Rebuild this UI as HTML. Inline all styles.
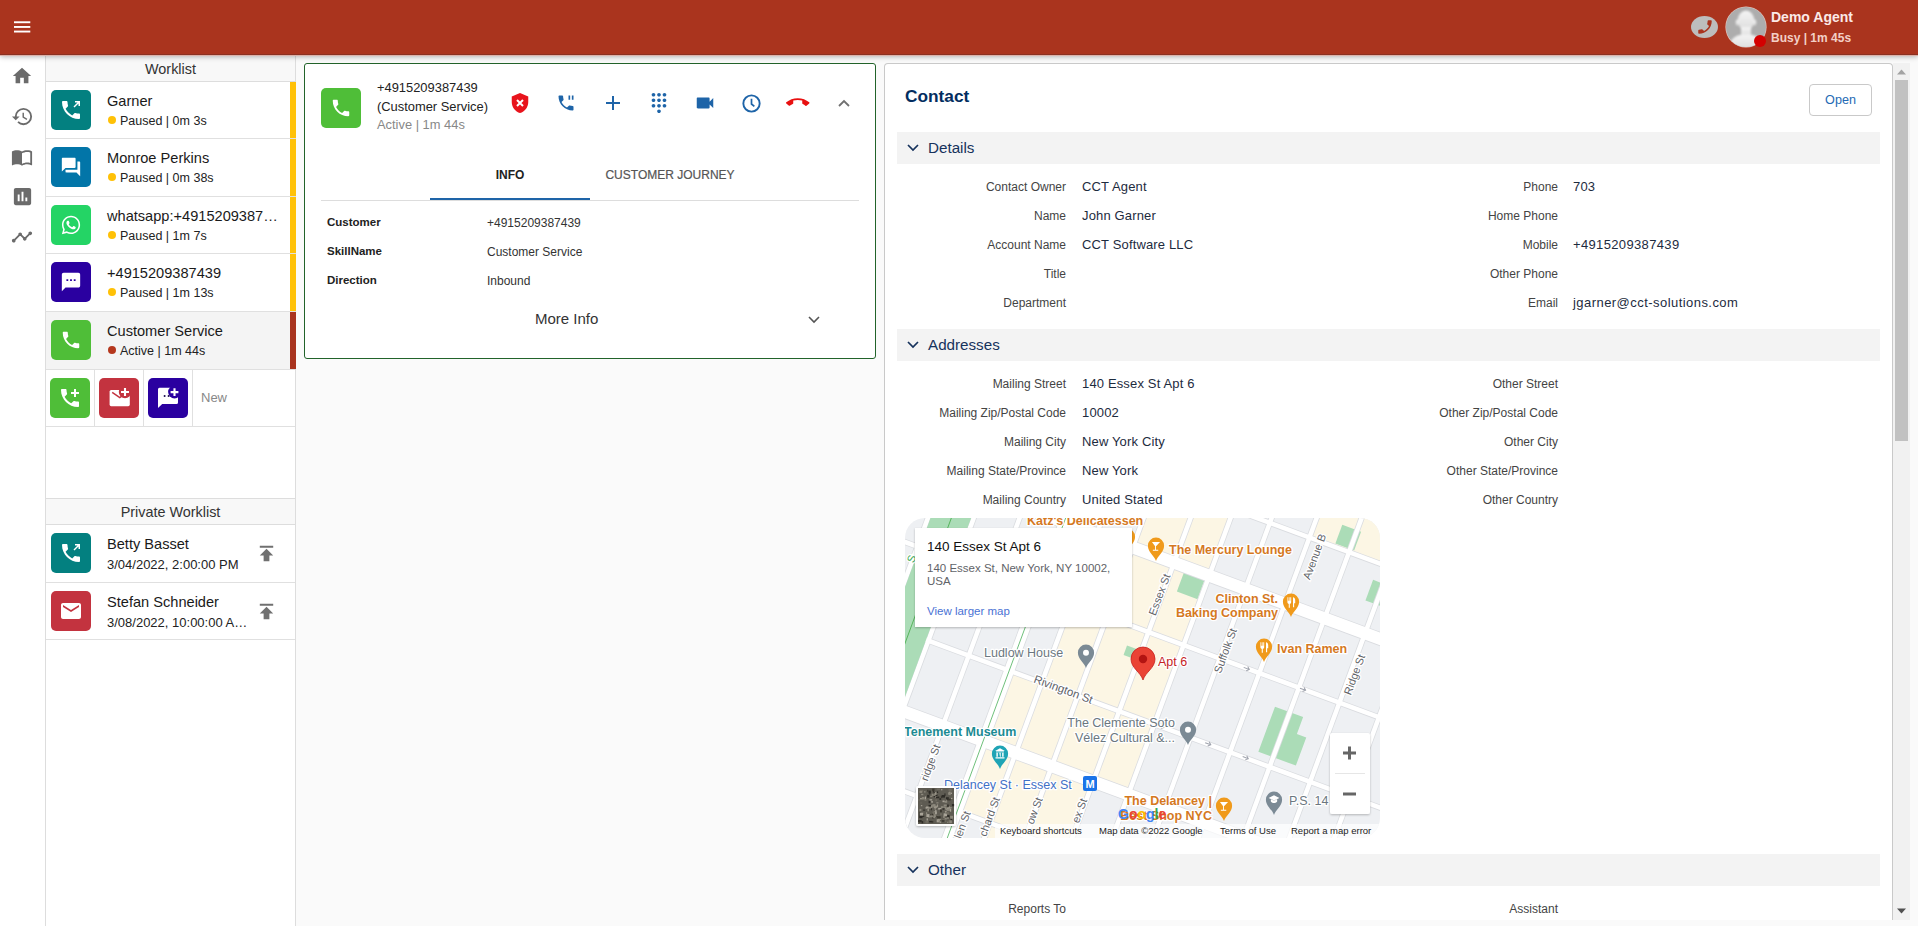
<!DOCTYPE html>
<html><head><meta charset="utf-8">
<style>
*{box-sizing:border-box}
html,body{margin:0;padding:0}
body{width:1918px;height:926px;overflow:hidden;position:relative;background:#FAFAFA;font-family:"Liberation Sans",sans-serif;color:#222}
.a{position:absolute}
#hdr{left:0;top:0;width:1918px;height:55px;background:#AA341E;border-bottom:1px solid #8A3122;box-shadow:0 2px 5px rgba(0,0,0,.28);z-index:5}
#hsh{left:0;top:55px;width:1918px;height:1px;background:#DDB2AA;z-index:6}
#nav{left:0;top:55px;width:46px;height:871px;background:#fff;border-right:1px solid #ddd}
#wl{left:46px;top:55px;width:250px;height:871px;background:#fff;border-right:1px solid #ddd}
.wh{left:0;width:249px;height:27px;background:#F8F8F8;border-bottom:1px solid #ddd;text-align:center;font-size:14.4px;color:#333;line-height:28px}
.it{left:0;width:249px;border-bottom:1px solid #e0e0e0}
.ib{width:40px;height:40px;border-radius:5px}
.nm{font-size:14.6px;color:#1a1a1a;white-space:nowrap}
.st{font-size:12.5px;color:#222;white-space:nowrap}
.dot{width:8px;height:8px;border-radius:50%}
.bar{width:6px}
</style></head><body>
<div id="hdr" class="a">
<svg class="a" style="left:14px;top:21px" width="17" height="12" viewBox="0 0 17 12"><rect x="0" y="0.3" width="16.3" height="1.9" fill="#fff"/><rect x="0" y="5" width="16.3" height="1.9" fill="#fff"/><rect x="0" y="9.6" width="16.3" height="1.9" fill="#fff"/></svg>
<div class="a" style="left:1691px;top:16px;width:27px;height:22px;border-radius:50%;background:#BDBDBD"></div>
<svg class="a" style="left:1695.5px;top:17.5px" width="18" height="18" viewBox="0 0 24 24"><path fill="#A9341F" transform="rotate(-90 12 12)" d="M6.62 10.79c1.44 2.83 3.76 5.14 6.59 6.59l2.2-2.2c.27-.27.67-.36 1.02-.24 1.12.37 2.33.57 3.57.57.55 0 1 .45 1 1V20c0 .55-.45 1-1 1-9.39 0-17-7.61-17-17 0-.55.45-1 1-1h3.5c.55 0 1 .45 1 1 0 1.25.2 2.450.57 3.57.11.35.03.74-.25 1.02l-2.2 2.2z"/></svg>
<div class="a" style="left:1726px;top:7px;width:40px;height:40px;border-radius:50%;background:#ADADAD;overflow:hidden;box-shadow:0 0 0 0.6px #E8C6BE">
<svg class="a" style="left:0;top:0" width="40" height="40" viewBox="0 0 40 40"><defs><filter id="bl"><feGaussianBlur stdDeviation="0.9"/></filter><linearGradient id="sg" x1="0" y1="0" x2="0" y2="1"><stop offset="0" stop-color="#F4F4F4"/><stop offset="1" stop-color="#DCDCDC"/></linearGradient></defs><g filter="url(#bl)" fill="url(#sg)"><ellipse cx="20" cy="13.5" rx="8.3" ry="10"/><ellipse cx="11.5" cy="15.5" rx="1.8" ry="3"/><ellipse cx="28.5" cy="15.5" rx="1.8" ry="3"/><rect x="15" y="20" width="10" height="10"/><path d="M3 42 C3 32 9 28.5 16 27.5 H24 C31 28.5 37 32 37 42Z"/></g></svg>
</div>
<div class="a" style="left:1754px;top:35px;width:12px;height:12px;border-radius:50%;background:#D40000"></div>
<div class="a" style="left:1771px;top:9px;font-size:14px;font-weight:bold;color:#FBE9E7;white-space:nowrap">Demo Agent</div>
<div class="a" style="left:1771px;top:31px;font-size:12px;font-weight:bold;color:#F3CFC6;white-space:nowrap">Busy | 1m 45s</div>
</div>
<div id="hsh" class="a"></div>
<div id="nav" class="a"><svg class="a" style="left:11px;top:10.3px" width="22" height="22" viewBox="0 0 24 24"><path fill="#6b6b6b" d="M10 20v-6h4v6h5v-8h3L12 3 2 12h3v8z" /></svg><svg class="a" style="left:11px;top:49.5px" width="23" height="23" viewBox="0 0 24 24"><path fill="#6b6b6b" d="M13 3a9 9 0 0 0-9 9H1l3.89 3.89.07.14L9 12H6c0-3.87 3.13-7 7-7s7 3.13 7 7-3.13 7-7 7c-1.93 0-3.68-.79-4.94-2.06l-1.42 1.42A8.954 8.954 0 0 0 13 21a9 9 0 0 0 0-18zm-1 5v5l4.28 2.54.72-1.21-3.5-2.08V8H12z" /></svg><svg class="a" style="left:10.5px;top:91px" width="22" height="22" viewBox="0 0 24 24"><path fill="#6b6b6b" d="M21 5c-1.11-.35-2.33-.5-3.5-.5-1.95 0-4.05.4-5.5 1.5-1.45-1.1-3.55-1.5-5.5-1.5S2.45 4.9 1 6v14.65c0 .25.25.5.5.5.1 0 .15-.05.25-.05C3.1 20.45 5.05 20 6.5 20c1.95 0 4.05.4 5.5 1.5 1.35-.85 3.8-1.5 5.5-1.5 1.65 0 3.35.3 4.75 1.05.1.05.15.05.25.05.25 0 .5-.25.5-.5V6c-.6-.45-1.25-.75-2-1zm0 13.5c-1.1-.35-2.3-.5-3.5-.5-1.7 0-4.15.65-5.5 1.5V8c1.35-.85 3.8-1.5 5.5-1.5 1.2 0 2.4.15 3.5.5v11.5z" /></svg><svg class="a" style="left:10.5px;top:130px" width="23" height="23" viewBox="0 0 24 24"><path fill="#6b6b6b" d="M19 3H5c-1.1 0-2 .9-2 2v14c0 1.1.9 2 2 2h14c1.1 0 2-.9 2-2V5c0-1.1-.9-2-2-2zM9 17H7v-7h2v7zm4 0h-2V7h2v10zm4 0h-2v-4h2v4z" /></svg><svg class="a" style="left:10.5px;top:170.5px" width="22" height="22" viewBox="0 0 24 24"><path fill="#6b6b6b" d="M23 8c0 1.1-.9 2-2 2-.18 0-.35-.02-.51-.07l-3.56 3.55c.05.16.07.34.07.52 0 1.1-.9 2-2 2s-2-.9-2-2c0-.18.02-.36.07-.52l-2.55-2.55c-.16.05-.34.07-.52.07s-.36-.02-.52-.07l-4.55 4.56c.05.16.07.33.07.51 0 1.1-.9 2-2 2s-2-.9-2-2 .9-2 2-2c.18 0 .35.02.51.07l4.56-4.55C8.02 9.36 8 9.18 8 9c0-1.1.9-2 2-2s2 .9 2 2c0 .18-.02.36-.07.52l2.55 2.55c.16-.05.34-.07.52-.07s.36.02.52.07l3.55-3.56C19.02 8.35 19 8.18 19 8c0-1.1.9-2 2-2s2 .9 2 2z" /></svg></div>
<div id="wl" class="a"><div class="a wh" style="top:0">Worklist</div><div class="a it" style="top:27px;height:57px;background:#fff"><div class="a ib" style="left:5px;top:8px;background:#038080"><svg class="a" style="left:8px;top:8px" width="24" height="24" viewBox="0 0 24 24"><path fill="#fff" d="M20,15.5C18.8,15.5 17.5,15.3 16.4,14.9C16.3,14.9 16.2,14.9 16.1,14.9C15.8,14.9 15.6,15 15.4,15.2L13.2,17.4C10.4,15.9 8,13.6 6.6,10.8L8.8,8.6C9.1,8.3 9.2,7.9 9,7.6C8.7,6.5 8.5,5.2 8.5,4C8.5,3.5 8,3 7.5,3H4C3.5,3 3,3.5 3,4C3,13.4 10.6,21 20,21C20.5,21 21,20.5 21,20V16.5C21,16 20.5,15.5 20,15.5M16,3V4.5H18.5L14.5,8.5L15.5,9.5L19.5,5.5V8H21V3H16Z"/></svg></div><div class="a nm" style="left:61px;top:11px">Garner</div><div class="a dot" style="left:62px;top:34.3px;background:#FFC107"></div><div class="a st" style="left:74px;top:32px">Paused | 0m 3s</div><div class="a bar" style="left:244px;top:0;height:56px;background:#FFC107"></div></div><div class="a it" style="top:84px;height:58px;background:#fff"><div class="a ib" style="left:5px;top:8px;background:#0275A8"><svg class="a" style="left:9px;top:9px" width="22" height="22" viewBox="0 0 24 24"><path fill="#fff" d="M21 6h-2v9H6v2c0 .55.45 1 1 1h11l4 4V7c0-.55-.45-1-1-1zm-4 6V3c0-.55-.45-1-1-1H3c-.55 0-1 .45-1 1v14l4-4h10c.55 0 1-.45 1-1z"/></svg></div><div class="a nm" style="left:61px;top:11px">Monroe Perkins</div><div class="a dot" style="left:62px;top:34.3px;background:#FFC107"></div><div class="a st" style="left:74px;top:32px">Paused | 0m 38s</div><div class="a bar" style="left:244px;top:0;height:57px;background:#FFC107"></div></div><div class="a it" style="top:142px;height:57px;background:#fff"><div class="a ib" style="left:5px;top:8px;background:#24D465"><svg class="a" style="left:9px;top:9px" width="22" height="22" viewBox="0 0 24 24"><path fill="#fff" d="M12.04 2C6.58 2 2.13 6.45 2.13 11.91c0 1.75.46 3.45 1.32 4.95L2.05 22l5.25-1.38c1.45.79 3.08 1.21 4.74 1.21 5.46 0 9.91-4.45 9.91-9.91C21.95 6.45 17.5 2 12.04 2zm0 1.67c4.54 0 8.23 3.69 8.23 8.24 0 4.54-3.690 8.23-8.23 8.23-1.48 0-2.93-.39-4.19-1.15l-.3-.17-3.12.82.83-3.04-.2-.32a8.188 8.188 0 0 1-1.26-4.38c.01-4.54 3.7-8.23 8.24-8.23zM8.53 7.33c-.16 0-.43.06-.66.31-.22.25-.87.86-.87 2.07 0 1.22.89 2.39 1 2.56.14.17 1.76 2.67 4.25 3.73.59.27 1.05.42 1.41.53.6.19 1.15.16 1.58.1.48-.07 1.47-.6 1.68-1.18.21-.58.21-1.07.15-1.18-.07-.1-.23-.16-.48-.27-.25-.14-1.47-.74-1.69-.82-.23-.08-.37-.12-.56.12-.16.25-.64.81-.78.97-.15.17-.29.19-.53.07-.26-.13-1.06-.39-2-1.23-.74-.66-1.23-1.47-1.38-1.72-.12-.24-.01-.39.11-.5.11-.11.27-.29.37-.44.13-.14.17-.25.25-.41.08-.17.04-.31-.02-.43-.06-.11-.56-1.35-.77-1.84-.2-.48-.4-.42-.56-.43-.14 0-.3-.01-.47-.01z"/></svg></div><div class="a nm" style="left:61px;top:11px">whatsapp:+4915209387…</div><div class="a dot" style="left:62px;top:34.3px;background:#FFC107"></div><div class="a st" style="left:74px;top:32px">Paused | 1m 7s</div><div class="a bar" style="left:244px;top:0;height:56px;background:#FFC107"></div></div><div class="a it" style="top:199px;height:58px;background:#fff"><div class="a ib" style="left:5px;top:8px;background:#2A00A0"><svg class="a" style="left:9px;top:9px" width="22" height="22" viewBox="0 0 24 24"><path fill="#fff" d="M20 2H4c-1.1 0-1.99.9-1.99 2L2 22l4-4h14c1.1 0 2-.9 2-2V4c0-1.1-.9-2-2-2zM9 11H7V9h2v2zm4 0h-2V9h2v2zm4 0h-2V9h2v2z"/></svg></div><div class="a nm" style="left:61px;top:11px">+4915209387439</div><div class="a dot" style="left:62px;top:34.3px;background:#FFC107"></div><div class="a st" style="left:74px;top:32px">Paused | 1m 13s</div><div class="a bar" style="left:244px;top:0;height:57px;background:#FFC107"></div></div><div class="a it" style="top:257px;height:58px;background:#F4F4F4"><div class="a ib" style="left:5px;top:8px;background:#4FBE38"><svg class="a" style="left:9px;top:9px" width="22" height="22" viewBox="0 0 24 24"><path fill="#fff" d="M6.62 10.79c1.44 2.83 3.76 5.14 6.59 6.59l2.2-2.2c.27-.27.67-.36 1.02-.24 1.12.37 2.33.57 3.57.57.55 0 1 .45 1 1V20c0 .55-.45 1-1 1-9.39 0-17-7.61-17-17 0-.55.45-1 1-1h3.5c.55 0 1 .45 1 1 0 1.25.2 2.450.57 3.57.11.35.03.74-.25 1.02l-2.2 2.2z"/></svg></div><div class="a nm" style="left:61px;top:11px">Customer Service</div><div class="a dot" style="left:62px;top:34.3px;background:#B5381E"></div><div class="a st" style="left:74px;top:32px">Active | 1m 44s</div><div class="a bar" style="left:244px;top:0;height:57px;background:#A9341F"></div></div><div class="a it" style="top:315px;height:57px"><div class="a ib" style="left:4px;top:8px;background:#4FBE38"><svg class="a" style="left:8px;top:8px" width="24" height="24" viewBox="0 0 24 24"><path fill="#fff" d="M20 15.5c-1.25 0-2.45-.2-3.57-.57-.35-.11-.74-.03-1.02.24l-2.2 2.2c-2.83-1.44-5.15-3.75-6.59-6.59l2.2-2.21c.28-.26.36-.65.25-1C8.7 6.45 8.5 5.25 8.5 4c0-.55-.45-1-1-1H4c-.55 0-1 .45-1 1 0 9.39 7.61 17 17 17 .55 0 1-.45 1-1v-3.5c0-.55-.45-1-1-1zM21 6h-3V3h-2v3h-3v2h3v3h2V8h3z"/></svg></div><div class="a" style="left:48px;top:0;width:1px;height:56px;background:#e0e0e0"></div><div class="a ib" style="left:53px;top:8px;background:#C3333F"><svg class="a" style="left:0;top:0" width="40" height="40" viewBox="0 0 40 40"><defs><mask id="mm"><rect width="40" height="40" fill="#fff"/><circle cx="26" cy="14" r="6.2" fill="#000"/></mask></defs><rect x="10.6" y="12" width="20.2" height="16.2" rx="1.6" fill="#fff" mask="url(#mm)"/><path d="M13.2 14.3L20.8 19.6L22.8 18.2" fill="none" stroke="#C3333F" stroke-width="1.5"/><path d="M26 10v8M22 14h8" stroke="#fff" stroke-width="2.1"/></svg></div><div class="a" style="left:97px;top:0;width:1px;height:56px;background:#e0e0e0"></div><div class="a ib" style="left:102px;top:8px;background:#2A00A0"><svg class="a" style="left:0;top:0" width="40" height="40" viewBox="0 0 40 40"><defs><mask id="mc2"><rect width="40" height="40" fill="#fff"/><circle cx="26.5" cy="14" r="6.4" fill="#000"/></mask></defs><path d="M11.5 9.7h17a1.5 1.5 0 0 1 1.5 1.5v13.4a1.5 1.5 0 0 1-1.5 1.5H14.2L10 30V11.2a1.5 1.5 0 0 1 1.5-1.5z" fill="#fff" mask="url(#mc2)"/><circle cx="16.6" cy="18" r="1" fill="#1a0a50"/><circle cx="20.6" cy="18" r="1" fill="#1a0a50"/><path d="M26.5 10.2v7.8M22.6 14.1h7.8" stroke="#fff" stroke-width="2.1"/></svg></div><div class="a" style="left:146px;top:0;width:1px;height:56px;background:#e0e0e0"></div><div class="a" style="left:155px;top:20px;font-size:13px;color:#888">New</div></div><div class="a wh" style="top:443px;height:27px;border-top:1px solid #ddd;line-height:26px">Private Worklist</div><div class="a it" style="top:470px;height:58px;background:#fff"><div class="a ib" style="left:5px;top:8px;background:#038080"><svg class="a" style="left:8px;top:8px" width="24" height="24" viewBox="0 0 24 24"><path fill="#fff" d="M20,15.5C18.8,15.5 17.5,15.3 16.4,14.9C16.3,14.9 16.2,14.9 16.1,14.9C15.8,14.9 15.6,15 15.4,15.2L13.2,17.4C10.4,15.9 8,13.6 6.6,10.8L8.8,8.6C9.1,8.3 9.2,7.9 9,7.6C8.7,6.5 8.5,5.2 8.5,4C8.5,3.5 8,3 7.5,3H4C3.5,3 3,3.5 3,4C3,13.4 10.6,21 20,21C20.5,21 21,20.5 21,20V16.5C21,16 20.5,15.5 20,15.5M16,3V4.5H18.5L14.5,8.5L15.5,9.5L19.5,5.5V8H21V3H16Z"/></svg></div><div class="a nm" style="left:61px;top:11px">Betty Basset</div><div class="a st" style="left:61px;top:31.5px;font-size:13px">3/04/2022, 2:00:00 PM</div><svg class="a" style="left:209.2px;top:16.8px" width="23" height="23" viewBox="0 0 24 24"><path fill="#707070" d="M5 4v2h14V4H5zm0 10h4v6h6v-6h4l-7-7-7 7z" /></svg></div><div class="a it" style="top:528px;height:57px;background:#fff"><div class="a ib" style="left:5px;top:8px;background:#C3333F"><svg class="a" style="left:8px;top:8px" width="24" height="24" viewBox="0 0 24 24"><path fill="#fff" d="M20 4H4c-1.1 0-1.99.9-1.99 2L2 18c0 1.1.9 2 2 2h16c1.1 0 2-.9 2-2V6c0-1.1-.9-2-2-2zm0 4l-8 5-8-5V6l8 5 8-5v2z"/></svg></div><div class="a nm" style="left:61px;top:11px">Stefan Schneider</div><div class="a st" style="left:61px;top:31.5px;font-size:13px">3/08/2022, 10:00:00 A…</div><svg class="a" style="left:209.2px;top:16.8px" width="23" height="23" viewBox="0 0 24 24"><path fill="#707070" d="M5 4v2h14V4H5zm0 10h4v6h6v-6h4l-7-7-7 7z" /></svg></div></div>
<div id="card" class="a" style="left:304px;top:63px;width:572px;height:296px;background:#fff;border:1px solid #22632A;border-radius:3px">
<div class="a ib" style="left:16px;top:24px;background:#4FBE38"><svg class="a" style="left:9px;top:9px" width="22" height="22" viewBox="0 0 24 24"><path fill="#fff" d="M6.62 10.79c1.44 2.83 3.76 5.14 6.59 6.59l2.2-2.2c.27-.27.67-.36 1.02-.24 1.12.37 2.33.57 3.57.57.55 0 1 .45 1 1V20c0 .55-.45 1-1 1-9.39 0-17-7.61-17-17 0-.55.45-1 1-1h3.5c.55 0 1 .45 1 1 0 1.25.2 2.450.57 3.57.11.35.03.74-.25 1.02l-2.2 2.2z"/></svg></div><div class="a" style="left:72px;top:15px;font-size:12.9px;line-height:18.6px;color:#222;white-space:nowrap">+4915209387439<br>(Customer Service)<br><span style="color:#888">Active | 1m 44s</span></div><svg class="a" style="left:204px;top:28px" width="22" height="22" viewBox="0 0 24 24"><path fill="#E8141C" d="M12 1L3 5v6c0 5.55 3.84 10.74 9 12 5.16-1.26 9-6.45 9-12V5l-9-4z" /></svg><svg class="a" style="left:209px;top:33px" width="12" height="12" viewBox="0 0 12 12"><path d="M3 3L9 9M9 3L3 9" stroke="#fff" stroke-width="2"/></svg><svg class="a" style="left:251px;top:29px" width="20" height="20" viewBox="0 0 24 24"><path fill="#1E64A8" d="M20 15.5c-1.25 0-2.45-.2-3.57-.57-.35-.11-.74-.03-1.02.24l-2.2 2.2c-2.83-1.44-5.15-3.75-6.59-6.59l2.2-2.21c.28-.26.36-.65.25-1C8.7 6.45 8.5 5.25 8.5 4c0-.55-.45-1-1-1H4c-.55 0-1 .45-1 1 0 9.39 7.61 17 17 17 .55 0 1-.45 1-1v-3.5c0-.55-.45-1-1-1zM15 3h2v5h-2zM19 3h2v5h-2z" /></svg><svg class="a" style="left:301px;top:32px" width="14" height="14" viewBox="0 0 14 14"><path d="M7 0V14M0 7H14" stroke="#1E64A8" stroke-width="2"/></svg><svg class="a" style="left:343.3px;top:28.1px" width="22" height="22" viewBox="0 0 24 24"><path fill="#1E64A8" d="M12 19c-1.1 0-2 .9-2 2s.9 2 2 2 2-.9 2-2-.9-2-2-2zM6 1c-1.1 0-2 .9-2 2s.9 2 2 2 2-.9 2-2-.9-2-2-2zm0 6c-1.1 0-2 .9-2 2s.9 2 2 2 2-.9 2-2-.9-2-2-2zm0 6c-1.1 0-2 .9-2 2s.9 2 2 2 2-.9 2-2-.9-2-2-2zm12-8c1.1 0 2-.9 2-2s-.9-2-2-2-2 .9-2 2 .9 2 2 2zm-6 8c-1.1 0-2 .9-2 2s.9 2 2 2 2-.9 2-2-.9-2-2-2zm6 0c-1.1 0-2 .9-2 2s.9 2 2 2 2-.9 2-2-.9-2-2-2zm0-6c-1.1 0-2 .9-2 2s.9 2 2 2 2-.9 2-2-.9-2-2-2zm-6 0c-1.1 0-2 .9-2 2s.9 2 2 2 2-.9 2-2-.9-2-2-2zm0-6c-1.1 0-2 .9-2 2s.9 2 2 2 2-.9 2-2-.9-2-2-2z" /></svg><svg class="a" style="left:389.3px;top:28px" width="22" height="22" viewBox="0 0 24 24"><path fill="#1E64A8" d="M17 10.5V7c0-.55-.45-1-1-1H4c-.55 0-1 .45-1 1v10c0 .55.45 1 1 1h12c.55 0 1-.45 1-1v-3.5l4 4v-11l-4 4z" /></svg><svg class="a" style="left:437px;top:30px" width="19" height="19" viewBox="0 0 20 20"><circle cx="10" cy="10" r="8.6" fill="none" stroke="#1E64A8" stroke-width="2"/><path d="M10 5V10.5L13 13" fill="none" stroke="#1E64A8" stroke-width="1.8"/></svg><svg class="a" style="left:481px;top:27.9px" width="23.5" height="21" viewBox="0 0 24 24" preserveAspectRatio="none"><path fill="#E81010" d="M12 9c-1.6 0-3.15.25-4.6.72v3.1c0 .39-.23.74-.56.9-.98.49-1.87 1.12-2.66 1.85-.18.18-.43.28-.7.28-.28 0-.53-.11-.71-.29L.29 13.08c-.18-.17-.29-.42-.29-.7 0-.28.11-.53.29-.71C3.34 8.78 7.46 7 12 7s8.66 1.78 11.71 4.67c.18.18.29.43.29.71 0 .28-.11.53-.29.71l-2.48 2.48c-.18.18-.43.29-.71.29-.27 0-.52-.11-.7-.28-.79-.74-1.69-1.36-2.67-1.85-.33-.16-.56-.5-.56-.9v-3.1C15.15 9.25 13.6 9 12 9z"/></svg><svg class="a" style="left:533px;top:34.8px" width="12" height="8" viewBox="0 0 12 8"><path d="M1 7L6 2L11 7" fill="none" stroke="#707070" stroke-width="1.8"/></svg><div class="a" style="left:16px;top:136px;width:538px;height:1px;background:#ddd"></div><div class="a" style="left:125px;top:134px;width:160px;height:2px;background:#1E64A8"></div><div class="a" style="left:125px;top:104px;width:160px;text-align:center;font-size:12px;font-weight:bold;color:#222">INFO</div><div class="a" style="left:285px;top:104px;width:160px;text-align:center;font-size:12px;color:#555;-webkit-text-stroke:0.2px #555">CUSTOMER JOURNEY</div><div class="a" style="left:22px;top:152px;font-size:11.5px;font-weight:bold;color:#222">Customer</div><div class="a" style="left:182px;top:152px;font-size:12px;color:#333">+4915209387439</div><div class="a" style="left:22px;top:181px;font-size:11.5px;font-weight:bold;color:#222">SkillName</div><div class="a" style="left:182px;top:181px;font-size:12px;color:#333">Customer Service</div><div class="a" style="left:22px;top:210px;font-size:11.5px;font-weight:bold;color:#222">Direction</div><div class="a" style="left:182px;top:210px;font-size:12px;color:#333">Inbound</div><div class="a" style="left:230px;top:246px;font-size:15px;color:#333">More Info</div><svg class="a" style="left:503px;top:251.5px" width="12" height="8" viewBox="0 0 12 8"><path d="M1 1L6 6L11 1" fill="none" stroke="#555" stroke-width="1.6"/></svg></div>
<div id="cp" class="a" style="left:884px;top:63px;width:1009px;height:857px;background:#fff;border:1px solid #C9C9C9;border-bottom:none;border-radius:4px 4px 0 0;overflow:hidden">
<div class="a" style="left:20px;top:22px;white-space:nowrap;font-size:17.3px;font-weight:bold;color:#032D60">Contact</div>
<div class="a" style="left:924px;top:20px;width:63px;height:32px;border:1px solid #C9C9C9;border-radius:4px;background:#fff;text-align:center;line-height:31px;font-size:12.6px;color:#2469B4">Open</div>
<div class="a" style="left:12px;top:68px;width:983px;height:32px;background:#F3F3F3"></div>
<svg class="a" style="left:22px;top:80px" width="12" height="8" viewBox="0 0 12 8"><path d="M1 1L6 6L11 1" fill="none" stroke="#16325C" stroke-width="1.7"/></svg>
<div class="a" style="left:43px;top:75px;white-space:nowrap;font-size:15.2px;color:#16325C">Details</div>
<div class="a" style="left:-19px;top:116px;width:200px;font-size:12px;color:#444;text-align:right;white-space:nowrap">Contact Owner</div>
<div class="a" style="left:197px;top:115px;white-space:nowrap;font-size:13px;color:#1D2B3E;letter-spacing:0.15px">CCT Agent</div>
<div class="a" style="left:473px;top:116px;width:200px;font-size:12px;color:#444;text-align:right;white-space:nowrap">Phone</div>
<div class="a" style="left:688px;top:115px;white-space:nowrap;font-size:13px;color:#1D2B3E;letter-spacing:0.15px">703</div>
<div class="a" style="left:-19px;top:145px;width:200px;font-size:12px;color:#444;text-align:right;white-space:nowrap">Name</div>
<div class="a" style="left:197px;top:144px;white-space:nowrap;font-size:13px;color:#1D2B3E;letter-spacing:0.15px">John Garner</div>
<div class="a" style="left:473px;top:145px;width:200px;font-size:12px;color:#444;text-align:right;white-space:nowrap">Home Phone</div>
<div class="a" style="left:-19px;top:174px;width:200px;font-size:12px;color:#444;text-align:right;white-space:nowrap">Account Name</div>
<div class="a" style="left:197px;top:173px;white-space:nowrap;font-size:13px;color:#1D2B3E;letter-spacing:0.15px">CCT Software LLC</div>
<div class="a" style="left:473px;top:174px;width:200px;font-size:12px;color:#444;text-align:right;white-space:nowrap">Mobile</div>
<div class="a" style="left:688px;top:173px;white-space:nowrap;font-size:13px;color:#1D2B3E;letter-spacing:0.35px">+4915209387439</div>
<div class="a" style="left:-19px;top:203px;width:200px;font-size:12px;color:#444;text-align:right;white-space:nowrap">Title</div>
<div class="a" style="left:473px;top:203px;width:200px;font-size:12px;color:#444;text-align:right;white-space:nowrap">Other Phone</div>
<div class="a" style="left:-19px;top:232px;width:200px;font-size:12px;color:#444;text-align:right;white-space:nowrap">Department</div>
<div class="a" style="left:473px;top:232px;width:200px;font-size:12px;color:#444;text-align:right;white-space:nowrap">Email</div>
<div class="a" style="left:688px;top:231px;white-space:nowrap;font-size:13px;color:#1D2B3E;letter-spacing:0.45px">jgarner@cct-solutions.com</div>
<div class="a" style="left:12px;top:265px;width:983px;height:32px;background:#F3F3F3"></div>
<svg class="a" style="left:22px;top:277px" width="12" height="8" viewBox="0 0 12 8"><path d="M1 1L6 6L11 1" fill="none" stroke="#16325C" stroke-width="1.7"/></svg>
<div class="a" style="left:43px;top:272px;white-space:nowrap;font-size:15.2px;color:#16325C">Addresses</div>
<div class="a" style="left:-19px;top:313px;width:200px;font-size:12px;color:#444;text-align:right;white-space:nowrap">Mailing Street</div>
<div class="a" style="left:197px;top:312px;white-space:nowrap;font-size:13px;color:#1D2B3E;letter-spacing:0.15px">140 Essex St Apt 6</div>
<div class="a" style="left:473px;top:313px;width:200px;font-size:12px;color:#444;text-align:right;white-space:nowrap">Other Street</div>
<div class="a" style="left:-19px;top:342px;width:200px;font-size:12px;color:#444;text-align:right;white-space:nowrap">Mailing Zip/Postal Code</div>
<div class="a" style="left:197px;top:341px;white-space:nowrap;font-size:13px;color:#1D2B3E;letter-spacing:0.15px">10002</div>
<div class="a" style="left:473px;top:342px;width:200px;font-size:12px;color:#444;text-align:right;white-space:nowrap">Other Zip/Postal Code</div>
<div class="a" style="left:-19px;top:371px;width:200px;font-size:12px;color:#444;text-align:right;white-space:nowrap">Mailing City</div>
<div class="a" style="left:197px;top:370px;white-space:nowrap;font-size:13px;color:#1D2B3E;letter-spacing:0.15px">New York City</div>
<div class="a" style="left:473px;top:371px;width:200px;font-size:12px;color:#444;text-align:right;white-space:nowrap">Other City</div>
<div class="a" style="left:-19px;top:400px;width:200px;font-size:12px;color:#444;text-align:right;white-space:nowrap">Mailing State/Province</div>
<div class="a" style="left:197px;top:399px;white-space:nowrap;font-size:13px;color:#1D2B3E;letter-spacing:0.15px">New York</div>
<div class="a" style="left:473px;top:400px;width:200px;font-size:12px;color:#444;text-align:right;white-space:nowrap">Other State/Province</div>
<div class="a" style="left:-19px;top:429px;width:200px;font-size:12px;color:#444;text-align:right;white-space:nowrap">Mailing Country</div>
<div class="a" style="left:197px;top:428px;white-space:nowrap;font-size:13px;color:#1D2B3E;letter-spacing:0.15px">United Stated</div>
<div class="a" style="left:473px;top:429px;width:200px;font-size:12px;color:#444;text-align:right;white-space:nowrap">Other Country</div>
<svg class="a" style="left:20px;top:454px" width="475" height="320" viewBox="905 518 475 320">
<defs><clipPath id="mc"><rect x="905" y="518" width="475" height="320" rx="20" ry="20"/></clipPath></defs>
<g clip-path="url(#mc)">
<rect x="905" y="518" width="475" height="320" fill="#EEF0F3"/>
<g transform="translate(1143 660) rotate(20.3)">
<rect x="-87.1" y="-28.1" width="120.0" height="159.4" fill="#FCF6E4"/>
<rect x="-87.1" y="131.3" width="82.5" height="149.7" fill="#FCF6E4"/>
<rect x="-121.8" y="56.3" width="34.7" height="149.7" fill="#FCF6E4"/>
<rect x="-48.7" y="-172.6" width="81.6" height="144.5" fill="#FCF6E4"/>
<rect x="-87.1" y="-102" width="38.39999999999999" height="73.9" fill="#FCF6E4"/>
<rect x="113.6" y="-246" width="85.4" height="73.4" fill="#FCF6E4"/>
<rect x="199" y="-320" width="42.19999999999999" height="147.4" fill="#FCF6E4"/>
<rect x="-249" y="-400" width="39" height="800" fill="#ABDCB7"/>
<rect x="8" y="-96" width="22" height="20" fill="#ABDCB7"/>
<path d="M140 -2 h30 v18 h10 v30 h-40z" fill="#ABDCB7"/>
<rect x="140" y="-196" width="20" height="20" fill="#ABDCB7"/>
<rect x="188" y="-155" width="17" height="22" fill="#ABDCB7"/>
<rect x="-20" y="-8" width="16" height="10" fill="#ABDCB7"/>
<rect x="-303.05" y="-400" width="6.1" height="800" fill="#DADCE0"/>
<rect x="-254.05" y="-400" width="6.1" height="800" fill="#DADCE0"/>
<rect x="-211.05" y="-400" width="6.1" height="800" fill="#DADCE0"/>
<rect x="-168.05" y="-400" width="6.1" height="800" fill="#DADCE0"/>
<rect x="-127.6" y="-400" width="11.6" height="800" fill="#DADCE0"/>
<rect x="-90.14999999999999" y="-400" width="6.1" height="800" fill="#DADCE0"/>
<rect x="-51.75" y="-400" width="6.1" height="800" fill="#DADCE0"/>
<rect x="-7.6499999999999995" y="-400" width="6.1" height="800" fill="#DADCE0"/>
<rect x="29.849999999999998" y="-400" width="6.1" height="800" fill="#DADCE0"/>
<rect x="68.35000000000001" y="-400" width="6.1" height="800" fill="#DADCE0"/>
<rect x="110.55" y="-400" width="6.1" height="800" fill="#DADCE0"/>
<rect x="152.75" y="-400" width="6.1" height="800" fill="#DADCE0"/>
<rect x="195.95" y="-400" width="6.1" height="800" fill="#DADCE0"/>
<rect x="238.14999999999998" y="-400" width="6.1" height="800" fill="#DADCE0"/>
<rect x="280.34999999999997" y="-400" width="6.1" height="800" fill="#DADCE0"/>
<rect x="321.95" y="-400" width="6.1" height="800" fill="#DADCE0"/>
<rect x="-400" y="-323.05" width="800" height="6.1" fill="#DADCE0"/>
<rect x="-400" y="-249.05" width="800" height="6.1" fill="#DADCE0"/>
<rect x="-400" y="-175.65" width="800" height="6.1" fill="#DADCE0"/>
<rect x="-400" y="-108.8" width="800" height="13.6" fill="#DADCE0"/>
<rect x="-400" y="-31.150000000000002" width="800" height="6.1" fill="#DADCE0"/>
<rect x="-400" y="53.25" width="800" height="6.1" fill="#DADCE0"/>
<rect x="-400" y="124.50000000000001" width="800" height="13.6" fill="#DADCE0"/>
<rect x="-400" y="202.95" width="800" height="6.1" fill="#DADCE0"/>
<rect x="-400" y="277.95" width="800" height="6.1" fill="#DADCE0"/>
<rect x="-302.25" y="-400" width="4.5" height="800" fill="#fff"/>
<rect x="-253.25" y="-400" width="4.5" height="800" fill="#fff"/>
<rect x="-210.25" y="-400" width="4.5" height="800" fill="#fff"/>
<rect x="-167.25" y="-400" width="4.5" height="800" fill="#fff"/>
<rect x="-126.8" y="-400" width="10" height="800" fill="#fff"/>
<rect x="-89.35" y="-400" width="4.5" height="800" fill="#fff"/>
<rect x="-50.95" y="-400" width="4.5" height="800" fill="#fff"/>
<rect x="-6.85" y="-400" width="4.5" height="800" fill="#fff"/>
<rect x="30.65" y="-400" width="4.5" height="800" fill="#fff"/>
<rect x="69.15" y="-400" width="4.5" height="800" fill="#fff"/>
<rect x="111.35" y="-400" width="4.5" height="800" fill="#fff"/>
<rect x="153.55" y="-400" width="4.5" height="800" fill="#fff"/>
<rect x="196.75" y="-400" width="4.5" height="800" fill="#fff"/>
<rect x="238.95" y="-400" width="4.5" height="800" fill="#fff"/>
<rect x="281.15" y="-400" width="4.5" height="800" fill="#fff"/>
<rect x="322.75" y="-400" width="4.5" height="800" fill="#fff"/>
<rect x="-400" y="-322.25" width="800" height="4.5" fill="#fff"/>
<rect x="-400" y="-248.25" width="800" height="4.5" fill="#fff"/>
<rect x="-400" y="-174.85" width="800" height="4.5" fill="#fff"/>
<rect x="-400" y="-108.0" width="800" height="12" fill="#fff"/>
<rect x="-400" y="-30.35" width="800" height="4.5" fill="#fff"/>
<rect x="-400" y="54.05" width="800" height="4.5" fill="#fff"/>
<rect x="-400" y="125.30000000000001" width="800" height="12" fill="#fff"/>
<rect x="-400" y="203.75" width="800" height="4.5" fill="#fff"/>
<rect x="-400" y="278.75" width="800" height="4.5" fill="#fff"/>
<line x1="-121.8" y1="-400" x2="-121.8" y2="400" stroke="#5DB86A" stroke-width="0.8"/>
<rect x="-248.5" y="-400" width="38" height="800" fill="#ABDCB7"/>
<line x1="-229" y1="-400" x2="-229" y2="400" stroke="#4CAF50" stroke-width="0.8"/>
<path d="M37 56h6m-2.5-2.2l2.5 2.2-2.5 2.2" stroke="#A0A4AE" stroke-width="1" fill="none"/>
<path d="M87 56h6m-2.5-2.2l2.5 2.2-2.5 2.2" stroke="#A0A4AE" stroke-width="1" fill="none"/>
<path d="M127 56h6m-2.5-2.2l2.5 2.2-2.5 2.2" stroke="#A0A4AE" stroke-width="1" fill="none"/>
<path d="M97 -28h6m-2.5-2.2l2.5 2.2-2.5 2.2" stroke="#A0A4AE" stroke-width="1" fill="none"/>
<path d="M157 -28h6m-2.5-2.2l2.5 2.2-2.5 2.2" stroke="#A0A4AE" stroke-width="1" fill="none"/>
<path d="M217 131h6m-2.5-2.2l2.5 2.2-2.5 2.2" stroke="#A0A4AE" stroke-width="1" fill="none"/>
<path d="M257 131h6m-2.5-2.2l2.5 2.2-2.5 2.2" stroke="#A0A4AE" stroke-width="1" fill="none"/>
<path d="M57 131h6m-2.5-2.2l2.5 2.2-2.5 2.2" stroke="#A0A4AE" stroke-width="1" fill="none"/>
</g>
<text x="0" y="0" transform="translate(1163 596) rotate(-69.7)" font-family="Liberation Sans" font-size="11" fill="#5F6368" text-anchor="middle" stroke="#fff" stroke-width="2.5" paint-order="stroke">Essex St</text>
<text x="0" y="0" transform="translate(1229 652) rotate(-69.7)" font-family="Liberation Sans" font-size="11" fill="#5F6368" text-anchor="middle" stroke="#fff" stroke-width="2.5" paint-order="stroke">Suffolk St</text>
<text x="0" y="0" transform="translate(1358 676) rotate(-69.7)" font-family="Liberation Sans" font-size="11" fill="#5F6368" text-anchor="middle" stroke="#fff" stroke-width="2.5" paint-order="stroke">Ridge St</text>
<text x="0" y="0" transform="translate(1318 558) rotate(-69.7)" font-family="Liberation Sans" font-size="11" fill="#5F6368" text-anchor="middle" stroke="#fff" stroke-width="2.5" paint-order="stroke">Avenue B</text>
<text x="0" y="0" transform="translate(934 764) rotate(-69.7)" font-family="Liberation Sans" font-size="11" fill="#5F6368" text-anchor="middle" stroke="#fff" stroke-width="2.5" paint-order="stroke">ridge St</text>
<text x="0" y="0" transform="translate(993 818) rotate(-69.7)" font-family="Liberation Sans" font-size="11" fill="#5F6368" text-anchor="middle" stroke="#fff" stroke-width="2.5" paint-order="stroke">chard St</text>
<text x="0" y="0" transform="translate(1038 812) rotate(-69.7)" font-family="Liberation Sans" font-size="11" fill="#5F6368" text-anchor="middle" stroke="#fff" stroke-width="2.5" paint-order="stroke">ow St</text>
<text x="0" y="0" transform="translate(1083 812) rotate(-69.7)" font-family="Liberation Sans" font-size="11" fill="#5F6368" text-anchor="middle" stroke="#fff" stroke-width="2.5" paint-order="stroke">ex St</text>
<text x="0" y="0" transform="translate(966 826) rotate(-69.7)" font-family="Liberation Sans" font-size="11" fill="#5F6368" text-anchor="middle" stroke="#fff" stroke-width="2.5" paint-order="stroke">len St</text>
<text x="0" y="0" transform="translate(915 560) rotate(-69.7)" font-family="Liberation Sans" font-size="11" fill="#34A853" text-anchor="middle" stroke="#fff" stroke-width="2.5" paint-order="stroke">S</text>
<text x="0" y="0" transform="translate(1062 693) rotate(20.3)" font-family="Liberation Sans" font-size="11.5" fill="#5F6368" text-anchor="middle" stroke="#fff" stroke-width="2.5" paint-order="stroke">Rivington St</text>
<g transform="translate(1156 561) scale(0.9)"><path d="M0 0 C-2 -6 -9 -10 -9 -17 A9 9 0 1 1 9 -17 C9 -10 2 -6 0 0Z" fill="#F09A1B"/><path d="M-4.5 -21h9l-4.5 4.5v4h2.5v1.2h-6v-1.2h2.5v-4z" fill="#fff"/></g>
<g transform="translate(1291 617) scale(0.9)"><path d="M0 0 C-2 -6 -9 -10 -9 -17 A9 9 0 1 1 9 -17 C9 -10 2 -6 0 0Z" fill="#F09A1B"/><path d="M-4 -22v5.5c0 1 .6 1.6 1.5 1.8v4.5h1.2v-4.5c.9-.2 1.5-.8 1.5-1.8v-5.5h-1v4h-.8v-4h-1v4h-.8v-4zM2.2 -22c1.6 0 2.5 1.6 2.5 3.8v3h-1.2v4.5h-1.3z" fill="#fff"/></g>
<g transform="translate(1264 662) scale(0.9)"><path d="M0 0 C-2 -6 -9 -10 -9 -17 A9 9 0 1 1 9 -17 C9 -10 2 -6 0 0Z" fill="#F09A1B"/><path d="M-4 -22v5.5c0 1 .6 1.6 1.5 1.8v4.5h1.2v-4.5c.9-.2 1.5-.8 1.5-1.8v-5.5h-1v4h-.8v-4h-1v4h-.8v-4zM2.2 -22c1.6 0 2.5 1.6 2.5 3.8v3h-1.2v4.5h-1.3z" fill="#fff"/></g>
<g transform="translate(1086 668) scale(0.9)"><path d="M0 0 C-2 -6 -9 -10 -9 -17 A9 9 0 1 1 9 -17 C9 -10 2 -6 0 0Z" fill="#7B8A95"/><circle cx="0" cy="-17" r="3.3" fill="#fff"/></g>
<g transform="translate(1188 745) scale(0.9)"><path d="M0 0 C-2 -6 -9 -10 -9 -17 A9 9 0 1 1 9 -17 C9 -10 2 -6 0 0Z" fill="#7B8A95"/><circle cx="0" cy="-17" r="3.3" fill="#fff"/></g>
<g transform="translate(1000 769) scale(0.9)"><path d="M0 0 C-2 -6 -9 -10 -9 -17 A9 9 0 1 1 9 -17 C9 -10 2 -6 0 0Z" fill="#1FA4B5"/><path d="M0 -23l-5.5 3h11zM-4.5 -19.5h9v1h-9zM-4 -18h1.6v4.5h-1.6zM-.8 -18h1.6v4.5h-.8zM2.4 -18h1.6v4.5h-1.6zM-5 -13h10v1.3h-10z" fill="#fff"/></g>
<g transform="translate(1224 821) scale(0.9)"><path d="M0 0 C-2 -6 -9 -10 -9 -17 A9 9 0 1 1 9 -17 C9 -10 2 -6 0 0Z" fill="#F09A1B"/><path d="M-4.5 -21h9l-4.5 4.5v4h2.5v1.2h-6v-1.2h2.5v-4z" fill="#fff"/></g>
<g transform="translate(1274 815) scale(0.9)"><path d="M0 0 C-2 -6 -9 -10 -9 -17 A9 9 0 1 1 9 -17 C9 -10 2 -6 0 0Z" fill="#7B8A95"/><path d="M0 -22l-6 3 6 3 6-3zM-3.5 -17.5v2.5c1 1.2 2.2 1.7 3.5 1.7s2.5-.5 3.5-1.7v-2.5l-3.5 1.7z" fill="#fff"/></g>
<g transform="translate(1127 552) scale(0.9)"><path d="M0 0 C-2 -6 -9 -10 -9 -17 A9 9 0 1 1 9 -17 C9 -10 2 -6 0 0Z" fill="#F09A1B"/><path d="M-4.5 -21h9l-4.5 4.5v4h2.5v1.2h-6v-1.2h2.5v-4z" fill="#fff"/></g>
<g transform="translate(1143 680)"><path d="M0 0 C-2.5 -8 -12 -12 -12 -21 A12 12 0 1 1 12 -21 C12 -12 2.5 -8 0 0Z" fill="#EA4335" stroke="#C5221F" stroke-width="0.8"/><circle cx="0" cy="-21" r="4.2" fill="#B31412"/></g>
<text x="1027" y="525" font-family="Liberation Sans" font-size="12.5" fill="#D5791F" font-weight="bold" text-anchor="start" stroke="#fff" stroke-width="2.5" paint-order="stroke" stroke-linejoin="round" >Katz's Delicatessen</text>
<text x="1169" y="554" font-family="Liberation Sans" font-size="12.5" fill="#D5791F" font-weight="bold" text-anchor="start" stroke="#fff" stroke-width="2.5" paint-order="stroke" stroke-linejoin="round" >The Mercury Lounge</text>
<text x="1278" y="603" font-family="Liberation Sans" font-size="12.5" fill="#D5791F" font-weight="bold" text-anchor="end" stroke="#fff" stroke-width="2.5" paint-order="stroke" stroke-linejoin="round" >Clinton St.</text>
<text x="1278" y="617" font-family="Liberation Sans" font-size="12.5" fill="#D5791F" font-weight="bold" text-anchor="end" stroke="#fff" stroke-width="2.5" paint-order="stroke" stroke-linejoin="round" >Baking Company</text>
<text x="1277" y="653" font-family="Liberation Sans" font-size="12.5" fill="#D5791F" font-weight="bold" text-anchor="start" stroke="#fff" stroke-width="2.5" paint-order="stroke" stroke-linejoin="round" >Ivan Ramen</text>
<text x="984" y="657" font-family="Liberation Sans" font-size="12.5" fill="#6B7780" font-weight="normal" text-anchor="start" stroke="#fff" stroke-width="2.5" paint-order="stroke" stroke-linejoin="round" >Ludlow House</text>
<text x="1158" y="666" font-family="Liberation Sans" font-size="12.5" fill="#C5221F" font-weight="normal" text-anchor="start" stroke="#fff" stroke-width="2.5" paint-order="stroke" stroke-linejoin="round" >Apt 6</text>
<text x="1175" y="727" font-family="Liberation Sans" font-size="12.5" fill="#6B7780" font-weight="normal" text-anchor="end" stroke="#fff" stroke-width="2.5" paint-order="stroke" stroke-linejoin="round" >The Clemente Soto</text>
<text x="1175" y="742" font-family="Liberation Sans" font-size="12.5" fill="#6B7780" font-weight="normal" text-anchor="end" stroke="#fff" stroke-width="2.5" paint-order="stroke" stroke-linejoin="round" >Vélez Cultural &amp;...</text>
<text x="904" y="736" font-family="Liberation Sans" font-size="12.5" fill="#1C8B93" font-weight="bold" text-anchor="start" stroke="#fff" stroke-width="2.5" paint-order="stroke" stroke-linejoin="round" >Tenement Museum</text>
<text x="944" y="789" font-family="Liberation Sans" font-size="12.5" fill="#3F70C6" font-weight="normal" text-anchor="start" stroke="#fff" stroke-width="2.5" paint-order="stroke" stroke-linejoin="round" >Delancey St · Essex St</text>
<rect x="1083" y="776" width="14" height="15" rx="2" fill="#1A73E8"/><text x="1090" y="788" font-family="Liberation Sans" font-size="11" font-weight="bold" fill="#fff" text-anchor="middle">M</text>
<text x="1212" y="805" font-family="Liberation Sans" font-size="12.5" fill="#D5791F" font-weight="bold" text-anchor="end" stroke="#fff" stroke-width="2.5" paint-order="stroke" stroke-linejoin="round" >The Delancey |</text>
<text x="1212" y="820" font-family="Liberation Sans" font-size="12.5" fill="#D5791F" font-weight="bold" text-anchor="end" stroke="#fff" stroke-width="2.5" paint-order="stroke" stroke-linejoin="round" >Best Shop NYC</text>
<text x="1289" y="805" font-family="Liberation Sans" font-size="12.5" fill="#6B7780" font-weight="normal" text-anchor="start" stroke="#fff" stroke-width="2.5" paint-order="stroke" stroke-linejoin="round" >P.S. 14</text>
<text x="1118" y="819" font-family="Liberation Sans" font-size="14" font-weight="bold"><tspan fill="#4285F4">G</tspan><tspan fill="#EA4335">o</tspan><tspan fill="#FBBC05">o</tspan><tspan fill="#4285F4">g</tspan><tspan fill="#34A853">l</tspan><tspan fill="#EA4335">e</tspan></text>
<rect x="995" y="824" width="385" height="14" fill="#fff" fill-opacity="0.7"/>
<text x="1000" y="834" font-family="Liberation Sans" font-size="9.5" fill="#222">Keyboard shortcuts</text>
<text x="1099" y="834" font-family="Liberation Sans" font-size="9.5" fill="#222">Map data ©2022 Google</text>
<text x="1220" y="834" font-family="Liberation Sans" font-size="9.5" fill="#222">Terms of Use</text>
<text x="1291" y="834" font-family="Liberation Sans" font-size="9.5" fill="#222">Report a map error</text>
</g>
<rect x="915" y="528" width="217" height="99" fill="#fff" filter="url(#sh)"/>
<defs><filter id="sh" x="-10%" y="-10%" width="120%" height="130%"><feDropShadow dx="0" dy="1" stdDeviation="1" flood-color="#000" flood-opacity="0.25"/></filter></defs>
<text x="927" y="551" font-family="Liberation Sans" font-size="13.5" fill="#111">140 Essex St Apt 6</text>
<text x="927" y="572" font-family="Liberation Sans" font-size="11.5" fill="#5F6368">140 Essex St, New York, NY 10002,</text>
<text x="927" y="585" font-family="Liberation Sans" font-size="11.5" fill="#5F6368">USA</text>
<text x="927" y="615" font-family="Liberation Sans" font-size="11.5" fill="#4A72D4">View larger map</text>
<rect x="1330" y="733" width="40" height="81" rx="2" fill="#fff" filter="url(#sh)"/>
<path d="M1343 753h13M1349.5 746.5v13" stroke="#666" stroke-width="3"/>
<line x1="1335" y1="773.5" x2="1365" y2="773.5" stroke="#E6E6E6" stroke-width="1"/>
<path d="M1343 794h13" stroke="#666" stroke-width="3"/>
<rect x="916" y="786" width="40" height="40" rx="2" fill="#fff" filter="url(#sh)"/>
<g><rect x="918" y="788" width="36" height="36" fill="#5E5B52"/><rect x="926.1" y="806.5" width="3.3" height="1.9" fill="#A9A498"/><rect x="937.7" y="808.6" width="1.6" height="1.5" fill="#6F6B60"/><rect x="951.9" y="804.0" width="2.2" height="2.3" fill="#2E2C27"/><rect x="923.1" y="809.6" width="2.0" height="1.0" fill="#2E2C27"/><rect x="944.4" y="793.4" width="1.1" height="2.6" fill="#2E2C27"/><rect x="946.0" y="797.2" width="2.8" height="2.8" fill="#2E2C27"/><rect x="942.3" y="819.3" width="2.8" height="2.2" fill="#6F6B60"/><rect x="950.8" y="792.6" width="1.2" height="1.3" fill="#A9A498"/><rect x="925.4" y="820.8" width="2.9" height="2.7" fill="#6F6B60"/><rect x="932.3" y="816.3" width="1.9" height="2.2" fill="#2E2C27"/><rect x="937.9" y="818.7" width="3.3" height="1.1" fill="#9A9588"/><rect x="927.5" y="808.6" width="1.4" height="2.7" fill="#9A9588"/><rect x="950.8" y="818.8" width="1.3" height="2.3" fill="#2E2C27"/><rect x="939.5" y="821.6" width="1.7" height="1.1" fill="#A9A498"/><rect x="947.0" y="821.7" width="1.9" height="1.1" fill="#8C887C"/><rect x="948.5" y="788.7" width="2.9" height="2.7" fill="#6F6B60"/><rect x="919.5" y="808.9" width="1.9" height="2.2" fill="#8C887C"/><rect x="936.7" y="819.3" width="2.3" height="3.0" fill="#A9A498"/><rect x="928.5" y="790.6" width="2.3" height="2.9" fill="#2E2C27"/><rect x="951.0" y="797.9" width="1.4" height="1.1" fill="#A9A498"/><rect x="947.5" y="798.7" width="3.2" height="1.8" fill="#3A372F"/><rect x="933.7" y="805.7" width="3.2" height="2.4" fill="#9A9588"/><rect x="921.5" y="821.1" width="1.7" height="2.3" fill="#2E2C27"/><rect x="942.3" y="819.8" width="3.4" height="2.0" fill="#6F6B60"/><rect x="936.6" y="788.4" width="3.5" height="1.6" fill="#6F6B60"/><rect x="930.8" y="808.0" width="1.2" height="2.3" fill="#3A372F"/><rect x="933.9" y="811.1" width="2.5" height="1.6" fill="#A9A498"/><rect x="934.6" y="808.0" width="1.1" height="1.7" fill="#9A9588"/><rect x="939.4" y="798.2" width="1.8" height="1.7" fill="#2E2C27"/><rect x="928.6" y="800.6" width="1.7" height="2.6" fill="#2E2C27"/><rect x="921.6" y="815.6" width="2.7" height="1.3" fill="#2E2C27"/><rect x="935.0" y="810.2" width="1.6" height="1.4" fill="#A9A498"/><rect x="932.8" y="811.7" width="2.5" height="2.9" fill="#8C887C"/><rect x="940.9" y="795.6" width="1.2" height="2.5" fill="#3A372F"/><rect x="925.4" y="807.3" width="1.6" height="1.2" fill="#A9A498"/><rect x="936.0" y="794.5" width="1.5" height="1.6" fill="#2E2C27"/><rect x="945.4" y="809.8" width="1.9" height="1.3" fill="#2E2C27"/><rect x="927.9" y="815.0" width="2.2" height="2.3" fill="#A9A498"/><rect x="927.9" y="807.3" width="3.3" height="1.3" fill="#8C887C"/><rect x="918.2" y="820.1" width="3.5" height="1.9" fill="#2E2C27"/><rect x="950.3" y="819.5" width="1.1" height="1.9" fill="#3A372F"/><rect x="943.6" y="813.4" width="2.4" height="2.8" fill="#A9A498"/><rect x="947.3" y="817.2" width="1.3" height="1.5" fill="#A9A498"/><rect x="919.2" y="815.3" width="3.3" height="2.8" fill="#2E2C27"/><rect x="948.6" y="807.6" width="2.2" height="1.2" fill="#8C887C"/><rect x="935.1" y="796.1" width="2.3" height="1.8" fill="#8C887C"/><rect x="949.9" y="808.8" width="1.3" height="2.9" fill="#A9A498"/><rect x="936.4" y="815.6" width="1.9" height="1.4" fill="#8C887C"/><rect x="936.2" y="815.8" width="1.6" height="1.5" fill="#3A372F"/><rect x="948.2" y="792.4" width="2.2" height="2.1" fill="#8C887C"/><rect x="931.6" y="813.7" width="1.7" height="2.1" fill="#3A372F"/><rect x="932.4" y="804.1" width="3.1" height="2.6" fill="#8C887C"/><rect x="919.6" y="789.7" width="3.4" height="2.7" fill="#6F6B60"/><rect x="920.9" y="805.1" width="1.4" height="1.1" fill="#A9A498"/><rect x="931.1" y="801.2" width="1.9" height="1.4" fill="#A9A498"/><rect x="929.2" y="792.2" width="1.0" height="2.4" fill="#2E2C27"/><rect x="945.0" y="807.3" width="1.9" height="2.2" fill="#8C887C"/><rect x="944.6" y="800.9" width="2.6" height="1.9" fill="#8C887C"/><rect x="930.7" y="804.9" width="1.8" height="2.9" fill="#9A9588"/><rect x="932.2" y="788.6" width="2.3" height="2.4" fill="#3A372F"/><rect x="920.4" y="802.4" width="1.3" height="1.1" fill="#6F6B60"/><rect x="929.1" y="820.9" width="3.0" height="1.5" fill="#2E2C27"/><rect x="933.8" y="792.2" width="2.7" height="2.8" fill="#9A9588"/><rect x="944.9" y="810.7" width="1.8" height="2.1" fill="#9A9588"/><rect x="945.6" y="812.4" width="1.4" height="2.5" fill="#6F6B60"/><rect x="919.5" y="791.1" width="2.6" height="1.8" fill="#8C887C"/><rect x="945.9" y="799.6" width="1.1" height="1.2" fill="#8C887C"/><rect x="934.4" y="811.7" width="2.4" height="2.6" fill="#A9A498"/><rect x="919.2" y="814.1" width="2.3" height="1.5" fill="#2E2C27"/><rect x="936.9" y="791.4" width="1.2" height="1.6" fill="#2E2C27"/><rect x="937.2" y="816.2" width="3.5" height="2.3" fill="#3A372F"/><rect x="933.4" y="811.8" width="1.6" height="2.2" fill="#6F6B60"/><rect x="949.9" y="806.9" width="1.9" height="1.5" fill="#8C887C"/><rect x="949.6" y="816.7" width="2.0" height="2.1" fill="#3A372F"/><rect x="937.7" y="819.4" width="2.2" height="2.3" fill="#9A9588"/><rect x="948.5" y="793.1" width="2.2" height="2.0" fill="#8C887C"/><rect x="941.8" y="820.3" width="2.8" height="1.4" fill="#2E2C27"/><rect x="927.1" y="794.8" width="2.3" height="2.9" fill="#2E2C27"/><rect x="947.0" y="806.3" width="2.7" height="2.7" fill="#A9A498"/><rect x="938.2" y="807.9" width="3.2" height="1.6" fill="#A9A498"/><rect x="927.1" y="815.3" width="1.4" height="1.7" fill="#3A372F"/><rect x="928.9" y="814.3" width="2.0" height="2.4" fill="#3A372F"/><rect x="941.9" y="795.0" width="3.1" height="2.6" fill="#2E2C27"/><rect x="936.9" y="804.4" width="1.2" height="2.9" fill="#9A9588"/><rect x="944.6" y="818.0" width="2.2" height="1.5" fill="#8C887C"/><rect x="926.0" y="812.4" width="1.2" height="1.4" fill="#9A9588"/><rect x="926.6" y="818.3" width="1.3" height="2.2" fill="#A9A498"/><rect x="941.0" y="789.2" width="1.4" height="1.1" fill="#A9A498"/><rect x="924.2" y="791.1" width="1.3" height="1.5" fill="#8C887C"/><rect x="949.1" y="789.2" width="2.5" height="2.4" fill="#6F6B60"/><rect x="918.2" y="799.4" width="1.9" height="1.2" fill="#6F6B60"/><rect x="939.9" y="813.2" width="2.0" height="2.1" fill="#6F6B60"/><rect x="922.1" y="797.3" width="2.1" height="1.9" fill="#9A9588"/><rect x="935.9" y="796.5" width="3.4" height="1.7" fill="#2E2C27"/><rect x="944.3" y="813.7" width="2.7" height="2.3" fill="#A9A498"/><rect x="950.1" y="815.8" width="2.9" height="2.9" fill="#8C887C"/><rect x="940.9" y="806.2" width="2.7" height="2.0" fill="#8C887C"/><rect x="920.0" y="798.0" width="2.4" height="1.4" fill="#9A9588"/><rect x="940.0" y="809.5" width="1.9" height="2.8" fill="#3A372F"/><rect x="933.4" y="791.7" width="1.4" height="1.7" fill="#2E2C27"/><rect x="942.5" y="808.3" width="1.8" height="1.4" fill="#2E2C27"/><rect x="934.4" y="814.6" width="1.2" height="2.4" fill="#9A9588"/><rect x="943.7" y="806.5" width="2.0" height="1.2" fill="#9A9588"/><rect x="927.2" y="789.8" width="1.1" height="2.0" fill="#3A372F"/><rect x="926.4" y="814.1" width="3.2" height="2.9" fill="#A9A498"/><rect x="933.2" y="815.5" width="1.9" height="2.7" fill="#8C887C"/><rect x="921.8" y="797.2" width="2.7" height="2.1" fill="#8C887C"/><rect x="948.9" y="791.8" width="1.5" height="1.8" fill="#9A9588"/><rect x="943.3" y="815.7" width="1.3" height="2.2" fill="#9A9588"/><rect x="947.2" y="815.1" width="2.3" height="2.1" fill="#2E2C27"/><rect x="924.9" y="796.5" width="1.1" height="2.6" fill="#A9A498"/><rect x="948.3" y="820.3" width="1.8" height="2.8" fill="#6F6B60"/><rect x="928.5" y="804.9" width="2.7" height="1.6" fill="#2E2C27"/><rect x="947.2" y="804.5" width="1.5" height="2.3" fill="#2E2C27"/><rect x="921.7" y="813.7" width="2.2" height="2.0" fill="#3A372F"/><rect x="933.7" y="794.6" width="1.5" height="2.6" fill="#2E2C27"/><rect x="949.5" y="820.2" width="2.4" height="2.9" fill="#8C887C"/><rect x="948.3" y="792.6" width="2.6" height="1.1" fill="#8C887C"/><rect x="930.2" y="795.9" width="2.2" height="1.0" fill="#8C887C"/><rect x="929.5" y="799.2" width="2.7" height="1.3" fill="#A9A498"/><rect x="947.2" y="808.4" width="2.8" height="2.5" fill="#8C887C"/><rect x="929.7" y="815.4" width="3.2" height="1.9" fill="#8C887C"/><rect x="943.7" y="804.5" width="3.0" height="1.8" fill="#8C887C"/><rect x="946.7" y="812.0" width="2.2" height="2.4" fill="#6F6B60"/><rect x="936.3" y="802.4" width="2.2" height="1.0" fill="#9A9588"/><rect x="933.6" y="811.5" width="1.5" height="2.8" fill="#6F6B60"/><rect x="942.5" y="800.5" width="2.1" height="1.7" fill="#A9A498"/><rect x="931.7" y="821.0" width="1.6" height="1.7" fill="#3A372F"/><rect x="947.1" y="806.1" width="1.5" height="1.3" fill="#3A372F"/><rect x="931.7" y="793.7" width="1.3" height="2.2" fill="#8C887C"/><rect x="933.1" y="794.3" width="2.0" height="1.6" fill="#8C887C"/><rect x="919.1" y="812.3" width="2.0" height="1.8" fill="#3A372F"/><rect x="918.9" y="820.8" width="1.6" height="1.8" fill="#3A372F"/><rect x="924.5" y="799.3" width="1.9" height="1.2" fill="#8C887C"/><rect x="919.8" y="812.7" width="3.5" height="2.9" fill="#A9A498"/><rect x="944.8" y="820.7" width="1.6" height="1.5" fill="#6F6B60"/><rect x="945.7" y="809.4" width="1.8" height="1.1" fill="#A9A498"/><rect x="932.8" y="791.0" width="1.0" height="1.1" fill="#2E2C27"/><rect x="921.1" y="793.8" width="2.2" height="1.4" fill="#8C887C"/><rect x="935.3" y="799.3" width="1.8" height="2.0" fill="#6F6B60"/></g>
</svg>
<div class="a" style="left:12px;top:790px;width:983px;height:32px;background:#F3F3F3"></div>
<svg class="a" style="left:22px;top:802px" width="12" height="8" viewBox="0 0 12 8"><path d="M1 1L6 6L11 1" fill="none" stroke="#16325C" stroke-width="1.7"/></svg>
<div class="a" style="left:43px;top:797px;white-space:nowrap;font-size:15.2px;color:#16325C">Other</div>
<div class="a" style="left:-19px;top:838px;width:200px;font-size:12px;color:#444;text-align:right;white-space:nowrap">Reports To</div>
<div class="a" style="left:473px;top:838px;width:200px;font-size:12px;color:#444;text-align:right;white-space:nowrap">Assistant</div>
</div>
<div class="a" style="left:1893px;top:63px;width:17px;height:857px;background:#F1F1F1"></div>
<div class="a" style="left:1895px;top:80px;width:13px;height:361px;background:#C1C1C1"></div>
<svg class="a" style="left:1897px;top:69px" width="9" height="6" viewBox="0 0 9 6"><path d="M0 5.5L4.5 0.5L9 5.5Z" fill="#A3A3A3"/></svg>
<svg class="a" style="left:1897px;top:908px" width="9" height="6" viewBox="0 0 9 6"><path d="M0 0.5L4.5 5.5L9 0.5Z" fill="#505050"/></svg>
</body></html>
